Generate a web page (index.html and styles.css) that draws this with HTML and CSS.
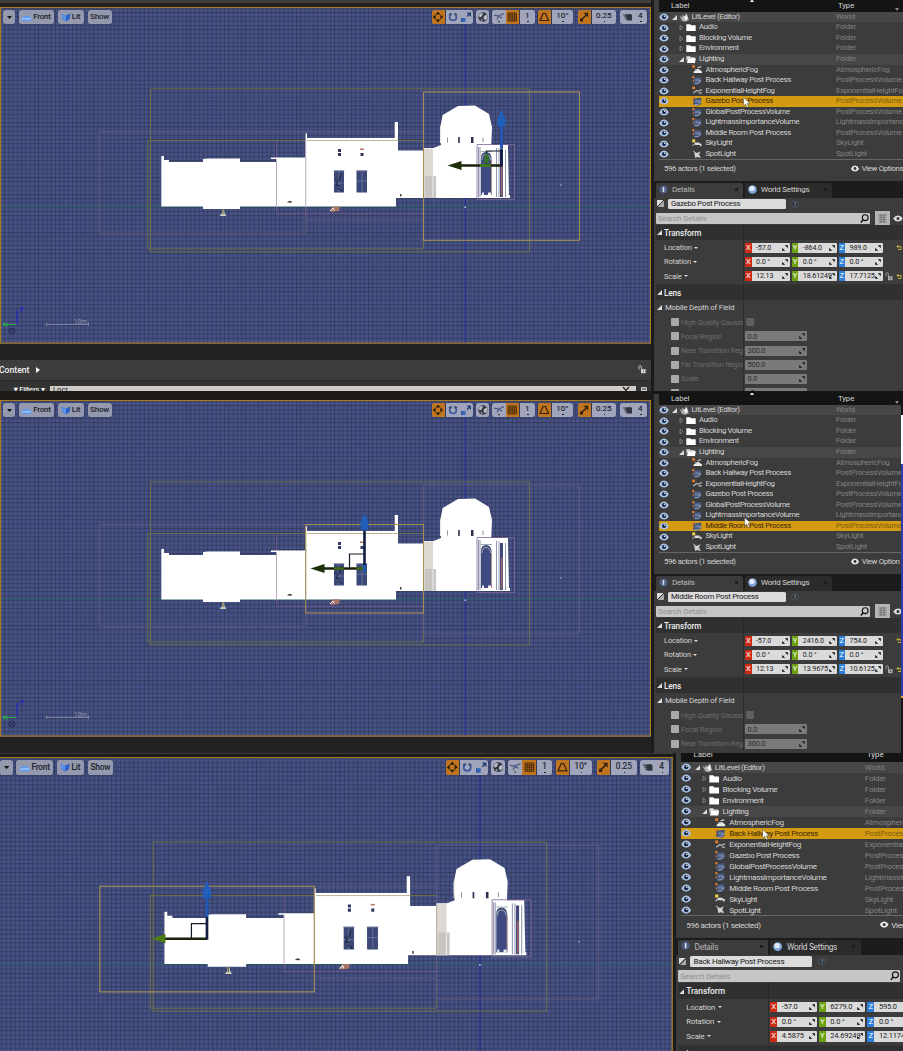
FILE: index.html
```html
<!DOCTYPE html>
<html lang="en">
<head>
<meta charset="utf-8">
<title>Level Editor</title>
<link rel="stylesheet" href="styles.css">
</head>
<body>
<svg class="defs" aria-hidden="true">
  <defs>
    <pattern id="grid" width="4.23" height="4.23" patternUnits="userSpaceOnUse" x="465.3" y="206.7">
      <path d="M0 0H4.23V4.23H0z" fill="#475289"/>
      <path d="M0 .5H4.23M.5 0V4.23" stroke="#353e60" stroke-width="1"/>
    </pattern>
    <symbol id="eye" viewBox="0 0 10 8"><path d="M.2 4.2Q2 .4 5 .4t4.800 3.800Q8 7.400 5 7.400T.2 4.200z" fill="#a9c0e2"/><circle cx="5" cy="4" r="2" fill="#14233f"/><circle cx="5.600" cy="3.200" r=".8" fill="#fff"/></symbol>
    <symbol id="folder" viewBox="0 0 10 8"><path d="M.3.8h3.800l1 1H9.700v5.800H.3z" fill="#fff"/></symbol>
    <symbol id="folder-open" viewBox="0 0 10 8"><path d="M.3.8h3.600l1 1h3.800v1.200H2.200L.6 6z" fill="#ddd"/><path d="M2.200 2.800h7.700L8.900 7.600H.9z" fill="#fff"/></symbol>
    <symbol id="world" viewBox="0 0 10 9"><path d="M.3 2.500 3 4.600 3.400 1.600l1.600 2L7.600.2 9.800 7 6.500 8.800 3.200 8z" fill="#b0b0b0"/><path d="M5 4l3-2 .6 4-2 1.600z" fill="#f2f2f2"/></symbol>
    <symbol id="volume" viewBox="0 0 10 9"><path d="M1.200 1.600 9.200.8v6L6 8.800 1.200 7.800z" fill="#3f5074"/><path d="M3 2.600h5v3.200H3z" fill="#66779a"/><path d="M2.600 7.600Q7.500 8.500 8.700 4" stroke="#b4c0d6" fill="none" stroke-width=".8"/><path d="M.2 0h2.200v2.200H.2zM.8 4h1v2h-1z" fill="#d9752c"/></symbol>
    <symbol id="fog" viewBox="0 0 10 9"><path d="M1.600 8Q1.200 5.600 4 5.400 5 3 7 4.200L10 6.400V8z" fill="#ececec"/><path d="M5.500 2.800 9 1.600M3 4.500l3 1" stroke="#ccc" stroke-width="1.200"/><path d="M.2.2h2.800v2.600H.2z" fill="#e07a2c"/></symbol>
    <symbol id="hfog" viewBox="0 0 10 9"><path d="M1.200 7 4.600 4.400 6 5.200 9.800 3.600M6.500 6.800H9.800" stroke="#bbb" fill="none" stroke-width="1.200"/><path d="M.2.6h2.800v2.600H.2z" fill="#e07a2c"/></symbol>
    <symbol id="sky" viewBox="0 0 10 9"><path d="M3 3.600h4.500v1.200H9.500v2.400H8V6H3z" fill="#ddd"/><path d="M.6 6.800 3.200 4.200" stroke="#ddd"/><path d="M.2.4h3v3H.2z" fill="#f3d24a"/></symbol>
    <symbol id="spot" viewBox="0 0 10 9"><path d="M2 1.400 5 3l3.600-1.800L7 4.400 8.800 8 5.200 7 3.200 8z" fill="#cfcfcf"/><path d="M.8.8l3 2.400" stroke="#aaa"/></symbol>
    <symbol id="expand" viewBox="0 0 6 6"><path d="M3.400.4H5.600V2.600zM.4 3.400 2.600 5.600H.4zM4.800 1.200 3.900 2.100M2.100 3.900 1.200 4.800" fill="#161616" stroke="#161616" stroke-width=".6"/></symbol>
    <symbol id="lock" viewBox="0 0 8 9"><path d="M1 4.5V2Q1 .8 2.200.8T3.400 2v2.400" fill="none" stroke="#ccc" stroke-width=".9"/><path d="M3 4.200h4.600v4H3z" fill="#d8d8d8"/><path d="M5 5.400h.8v1.600H5z" fill="#333"/></symbol>
    <symbol id="cursor" viewBox="0 0 8 11"><path d="M.6.4V8.800L2.600 7 4 10.400l1.500-.6L4.100 6.600H7z" fill="#fff" stroke="#333" stroke-width=".4"/></symbol>

    <g id="boxes" fill="none">
      <path d="M0 206.7H651" stroke="#2b6068" stroke-width="1"/>
      <path d="M465.3 7V344" stroke="#20289c" stroke-width="1"/>
      <path d="M150.5 88.800H529.500V252H150.500z" stroke="#686d48"/>
      <path d="M148 140.500H423.500V249H148z" stroke="#686d48"/>
    </g>
    <g id="volumes" fill="none" stroke="#645d80" stroke-width=".8">
      <path d="M99 131.500H305.700V233.300H99zM305.700 131.500H423.500V220H305.700zM423.500 92H579.500V240.300H423.500z"/>
      <path d="M276.500 141V213.500H423.500" stroke="#71548a"/>
    </g>
    <g id="building">
      <path d="M161.300 156H164V160H169V162H203V159L208 158.500H240V162H276.500V159H271V157.500H305.600V133.500H307V138H394.700V122H398V150.500H423.500V148H433.500L441 145 440 137V128L442.700 115 458 106 475 105.500 489 114 492 127 491.300 145H508V148L509 195H510V198H396V206.500H240V209H203V206.500H161.300z" fill="#fff"/>
      <path d="M423.500 148.500H433V198H423.500z" fill="#ddd8d2"/>
      <path d="M425 176H436V198H425z" fill="#c8c4c2"/>
      <path d="M433 176V198" stroke="#eee"/>
      <path d="M440.500 127V143" stroke="#eee8e2"/>
      <path d="M276.500 159V206M305.700 140V206" stroke="#b9aec0"/>
      <path d="M307 140.500H398M423.500 150V198" stroke="#a7a287" stroke-width=".8"/>
      <path d="M447.500 137.500V142.500M483 137.500V142" stroke="#777" stroke-width=".8"/>
      <path d="M458.200 137H459.800V143H458.200zM471 137H473.500V143H471z" fill="#2c304c"/>
      <path d="M338 149h3v3h-3zM338 153h3v3h-3zM360.500 153h3v3h-3z" fill="#333a60"/>
      <path d="M360 148.500h4v1.500h-4z" fill="#b87664"/>
      <path d="M334 170.500H344V192.500H334zM356.500 170.500H367V192.500H356.500z" fill="#3c4878"/>
      <path d="M333.500 171H344.500M356 171H367.500M339 172V192M362 172V192M334 183H344M357 181H367" stroke="#7c86aa" stroke-width=".6"/>
      <path d="M335 180l3 2-2 3 4 1M341 173l-2 8M338 188l4 3" stroke="#1a2236" fill="none"/>
      <path d="M287 202.500q2.500-3 5-.5v.8zM400 196.500V194h1.500v2.500z" fill="#444"/>
      <path d="M481 195V158Q481 152 486 152T491.500 158V195z" fill="#3f4b80"/>
      <path d="M481 151.500H492M482 160Q482 154.500 486 154.500T490.500 160" stroke="#9aa" fill="none"/>
      <path d="M478.500 147V197M480 147V197M496.500 148V197M499 148V197M505.500 150V197" stroke="#77799c" stroke-width=".8"/>
      <path d="M501.500 150V197" stroke="#414a78" stroke-width="3"/>
      <path d="M501.700 165V196" stroke="#b0685e" stroke-width="1.300"/>
      <path d="M491.500 160V195" stroke="#b28c8a"/>
      <path d="M482 192.500h2v2.500h-2zM488 192.500h3v2.500h-3zM506 193h3v3h-3z" fill="#eee"/>
      <path d="M477 144.500H514.500V199.500H477z" fill="none" stroke="#806598" stroke-width=".8"/>
      <path d="M222 209.500H224.200L224.500 213 226.500 216H219.500L222 213z" fill="#c7c8bd"/><path d="M223 209V214" stroke="#666030"/>
      <path d="M330 210l3-3.500H340L339 211 331 212z" fill="#a87468"/><path d="M330 211l3-3 1 2.500" stroke="#eee" fill="none"/>
      <path d="M560 184.500h1.500v1h-1.500zM464.500 206.500h1.500v1.500h-1.500z" fill="#bcd"/>
    </g>
    <g id="scale" fill="none">
      <path d="M46.500 322.500V326M46.500 324.500H88.500M88.500 322.500V326" stroke="#8b91ab" stroke-width=".8"/>
      <path d="M17 324V310M20 308h3.500l-3 4" stroke="#1c24c8"/>
      <path d="M16 324.500H3M5 322.500l-2 4M3 323l3 3.500M7 322.500v4" stroke="#27b04c"/>
      <circle cx="12" cy="331" r="3" stroke="#232a50"/><path d="M10.500 329l3 4M13.500 329l-3 4" stroke="#232a50" stroke-width=".7"/>
    </g>
  </defs>
</svg>
<main class="board" id="board"></main>
<script src="app.js"></script>
</body>
</html>
```

FILE: styles.css
```css
* { box-sizing: border-box; }
body { margin: 0; background: #1f1f1f; font-family: Roboto, "Noto Sans", sans-serif; }
.defs { position: absolute; width: 0; height: 0; }
.board { width: 903px; height: 1051px; overflow: hidden; }
svg { display: block; flex: none; }

.shot { overflow: hidden; }
.shot-a { height: 391px; }
.shot-b { height: 362px; position: relative; }
.shot-b .editor { margin-top: 2px; width: 901px; }
.shot-b { background: linear-gradient(90deg, #1f1b18 652px, #161616 652px); }
.shot-c { height: 298px; background: #171717; }
.shot-c .editor { zoom: 1.038; margin: -3px 0 0 -2.800px; }

.editor { display: grid; grid-template-columns: 651px 252px; width: 903px; height: 400px; overflow: hidden; position: relative; }
.left { background: #222; height: 400px; min-width: 0; overflow: hidden; }
.strip { height: 7px; background: #222; border-top: 3px solid #3d3d3d; }
.shot-b .strip, .shot-c .strip { border-top: 0; background: #1f1b18; }
.shot-c .strip { border-top: 4px solid #3a3a3a; }

.viewport { position: relative; height: 337px; overflow: hidden; }
.scene { position: absolute; inset: 0; }
.bar { position: relative; display: flex; padding: 3px 4px 0 3px; color: #20222b; font-weight: 500; font-size: 8px; letter-spacing: -.2px; line-height: 14px; }
.btn { height: 14px; border-radius: 2.500px; background: #9499ae; display: flex; align-items: center; justify-content: center; gap: 1px; box-shadow: 0 0 1px #20243c; overflow: hidden; flex: none; }
.btn.v1 { width: 12px; margin-right: 3.500px; }
.btn.v2 { width: 35px; margin-right: 4px; }
.btn.v3 { width: 26px; margin-right: 4px; }
.btn.v4 { width: 24px; }
.tools { margin-left: auto; display: flex; }
.tool { display: flex; height: 14px; border-radius: 2.500px; background: #a0a5bb; overflow: hidden; box-shadow: 0 0 1px #20243c; flex: none; }
.cell { display: flex; align-items: center; justify-content: center; height: 14px; flex: none; position: relative; }
.cell.on { background: #bf7420; border-right: 1px solid #343a55; }
.num { padding-bottom: 3px; font-size: 8px; font-weight: 400; letter-spacing: 0; -webkit-text-stroke: .15px #20222b; }
.num::after { content: ""; position: absolute; left: 50%; bottom: 2px; width: 1.500px; height: 1.200px; background: #222; }

.below { height: 16px; background: #222; }
.path { height: 20.500px; background: #3d3d3d; display: flex; align-items: center; justify-content: space-between; color: #f2f2f2; font-weight: 500; font-size: 8.600px; padding-right: 5px; border-bottom: 1px solid #2a2a2a; }
.path span { display: flex; gap: 7px; align-items: center; margin-left: -1px; }
.filters { height: 10.500px; background: #333; display: flex; font-size: 7.600px; color: #eee; overflow: hidden; }
.filters b { font-weight: 500; width: 50px; padding: 4px 0 0 12px; flex: none; line-height: 9px; white-space: nowrap; letter-spacing: -.2px; }
.filters i { width: 586px; height: 9px; margin-top: 5px; background: #cfcbc8; color: #222; padding: 0 6px 0 3px; font-style: normal; line-height: 8px; display: flex; justify-content: space-between; }
.filters i svg { margin: 0; }
.filters svg { margin: 5px 0 0 2px; }
.shot-b .below { height: 60px; border-bottom: 0; }
.shot-b .path, .shot-b .filters, .shot-c .path, .shot-c .filters { display: none; }

.right { background: #1b1b1b; padding-left: 3px; min-width: 0; overflow: hidden; color: #d4d4d4; font-size: 7.800px; letter-spacing: -.36px; white-space: nowrap; }
.panel { background: #3c3c3c; overflow: hidden; }
.tree { height: 181px; padding-left: 5px; }
.head { height: 12.800px; background: #141414; display: flex; line-height: 11px; position: relative; margin-top: -1px; padding-top: .5px; letter-spacing: -.1px; }
.shot-b .tree { margin-top: -2px; padding-top: 2px; background: linear-gradient(#141414 3px, #3c3c3c 3px); height: 183px; }
.head .a { padding-left: 12px; width: 179px; }
.head .sort { position: absolute; left: 91px; top: 0; border: 2.500px solid transparent; border-top: 0; border-bottom: 3px solid #eee; }
.head .drop { position: absolute; right: 4px; bottom: 1px; border: 2.500px solid transparent; border-bottom: 0; border-top: 3px solid #888; }
.row { height: 10.560px; display: flex; align-items: center; line-height: 10.560px; }
.row.lit { background: #474747; }
.row .see { margin-left: 0; width: 10px; height: 8px; }
.row .name { width: 167px; display: flex; align-items: center; overflow: hidden; }
.row .type { color: #828282; letter-spacing: -.28px; }
.row.sel { background: #d59b10; color: #3b2605; }
.row.sel .type { color: #7f5c12; }
.tw { width: 5px; height: 5px; margin-right: 2px; }
.d0 { padding-left: 3px; } .d1 { padding-left: 10px; } .d2 { padding-left: 23px; }
.name svg.ic { width: 10px; height: 9px; margin-right: 3.500px; }
.d0 svg.ic { margin-right: 2.500px; }
.d1 svg.ic { width: 10.500px; margin-right: 2.500px; }
.foot { height: 20px; border-top: 1px solid #666; display: flex; align-items: center; padding: 0 0 3.500px 5px; }
.foot .view { margin-left: 114px; display: flex; gap: 2px; align-items: center; }

.tabs { height: 16.500px; background: #1c1c1c; display: flex; padding: 2px 0 0 2px; gap: 2px; font-size: 8px; letter-spacing: -.25px; }
.tab { width: 87px; height: 14.500px; display: flex; align-items: center; gap: 4.500px; padding: 0 0 1.500px 2.500px; background: #2b2b2b; border-radius: 2px 2px 0 0; }
.tab.cur { background: #3c3c3c; color: #b9b9b9; }
.tab s { margin-left: auto; margin-right: 5px; width: 3px; height: 3px; background: #1f1f1f; }
.details { padding-left: 2px; height: 300px; }
.title { height: 13.500px; display: flex; align-items: center; padding: 0 0 1px 1px; }
.title .ed { width: 117.500px; height: 10.500px; background: #dcdcdc; color: #191919; border-radius: 1.500px; margin: 0 5px 0 4px; padding-left: 3px; line-height: 10.500px; letter-spacing: -.27px; }
.search { height: 14px; display: flex; align-items: center; letter-spacing: -.1px; }
.search .in { width: 217px; height: 11px; background: #c6c6c6; color: #8f8f8f; display: flex; justify-content: space-between; align-items: center; padding: 0 1px 0 2px; border-radius: 1px; }
.search .gr { width: 15px; height: 14px; background: #b4b4b4; margin: 0 3px 0 5px; display: flex; align-items: center; justify-content: center; }
.sect { height: 15px; background: linear-gradient(90deg, #303030 87px, #272727 87px, #272727 88px, #303030 88px); display: flex; align-items: center; padding-left: 1px; color: #ececec; font-weight: 500; font-size: 8.200px; letter-spacing: -.1px; }
.search + .sect { margin-bottom: .8px; }
.prop { height: 14.100px; display: flex; align-items: center; background: linear-gradient(90deg, transparent 87px, #2c2c2c 87px, #2c2c2c 88px, transparent 88px); font-size: 7.500px; letter-spacing: -.15px; }
.prop .lab { width: 87px; padding-left: 8px; display: flex; align-items: center; gap: 2.500px; overflow: hidden; flex: none; }
.lab::after { content: ""; border: 2.300px solid transparent; border-top: 2.800px solid #ddd; border-bottom: 0; }
.vals { display: flex; padding-left: 2px; gap: 2px; }
.val { width: 44.800px; height: 10px; display: flex; line-height: 10px; overflow: hidden; }
.val u { width: 6.500px; text-decoration: none; text-align: center; color: #fff; flex: none; font-size: 7.500px; letter-spacing: 0; }
.val:nth-child(1) u { background: #cf2b14; } .val:nth-child(2) u { background: #6ba00e; } .val:nth-child(3) u { background: #2c7fd8; }
.val em { flex: 1; min-width: 0; background: #dadada; color: #222; font-style: normal; font-size: 7.200px; letter-spacing: -.15px; display: flex; align-items: center; padding-left: 4.500px; overflow: hidden; position: relative; border-radius: 0 1px 1px 0; }
.val em svg { position: absolute; right: 2px; }
.sub { height: 15px; display: flex; align-items: center; gap: 1px; padding-left: 1px; font-size: 7.800px; letter-spacing: -.2px; background: linear-gradient(90deg, transparent 87px, #2c2c2c 87px, #2c2c2c 88px, transparent 88px); }
.dim { letter-spacing: -.2px; }
.dim .lab { padding-left: 15px; color: #6c6c6c; gap: 2px; }
.dim .lab::after { content: none; }
.dim .lab::before { content: ""; width: 8px; height: 8px; background: #a9a9a9; border-radius: 1px; flex: none; }
.dim .fld { margin-left: 2px; width: 62px; height: 10px; background: #7a7a7a; color: #2e2e2e; display: flex; align-items: center; justify-content: space-between; padding: 0 2.500px; border-radius: 1px; }
.dim .chk { margin-left: 3px; width: 8px; height: 8px; background: #5f5f5f; border-radius: 1px; }
.gap { height: 2.200px; border-bottom: 1px solid #333; }
.cursor { position: absolute; width: 8px; height: 11px; }
.edge { position: absolute; right: 0; top: 0; width: 2px; height: 362px; background: linear-gradient(#161616 24px, #fff 24px 73px, #323ca8 73px 305px, #d9a020 305px 307px, #161616 307px); }
```

FILE: app.js
```js
const use = (id, w, h, cls = "") =>
  `<svg class="${cls}" width="${w}" height="${h}"><use href="#${id}" width="${w}" height="${h}"/></svg>`;

const shots = [
  { cls: "a", sel: "Gazebo Post Process", box: [423.5, 92, 156, 148.3], giz: [501.5, 165.5], up: 17, green: "#1d3009",
    loc: ["-57.0", "-864.0", "989.0"], scale: ["12.13", "18.61249", "17.7125"], cur: [743, 97], opt: "View Options" },
  { cls: "b", sel: "Middle Room Post Process", box: [305.7, 131.5, 117.8, 88.5], giz: [364.5, 175.5], up: 38, green: "#1d3009",
    loc: ["-57.0", "2416.0", "754.0"], scale: ["12.13", "13.9675", "10.6125"], cur: [743.5, 124], opt: "View Option" },
  { cls: "c", sel: "Back Hallway Post Process", box: [99, 131.5, 206.7, 101.8], giz: [202.3, 182], up: 21, green: "#4b7a14",
    loc: ["-57.0", "6279.0", "595.0"], scale: ["4.5875", "24.69249", "12.11749"], cur: [736.5, 76.5], opt: "View Options" }
];

const actors = [
  ["LitLevel (Editor)", "World", "world", 0], ["Audio", "Folder", "folder", 1],
  ["Blocking Volume", "Folder", "folder", 1], ["Environment", "Folder", "folder", 1],
  ["Lighting", "Folder", "folder-open", 1], ["AtmosphericFog", "AtmosphericFog", "fog", 2],
  ["Back Hallway Post Process", "PostProcessVolume", "volume", 2],
  ["ExponentialHeightFog", "ExponentialHeightFo", "hfog", 2],
  ["Gazebo Post Process", "PostProcessVolume", "volume", 2],
  ["GlobalPostProcessVolume", "PostProcessVolume", "volume", 2],
  ["LightmassImportanceVolume", "LightmassImportanc", "volume", 2],
  ["Middle Room Post Process", "PostProcessVolume", "volume", 2],
  ["SkyLight", "SkyLight", "sky", 2], ["SpotLight", "SpotLight", "spot", 2]
];

const openTri = `<svg class="tw" viewBox="0 0 5 5"><path d="M5 0V5H0z" fill="#ddd"/></svg>`;
const shutTri = `<svg class="tw" viewBox="0 0 5 5"><path d="M1 0V5L4 2.5z" fill="none" stroke="#999" stroke-width=".7"/></svg>`;
const icon = (w, body) => `<svg width="${w}" height="12" viewBox="0 0 ${w} 12">${body}</svg>`;

const row = (a, sel) => {
  const tri = a[3] === 2 ? "" : (a[2] === "world" || a[2] === "folder-open") ? openTri : shutTri;
  const lit = a[2] === "world" || a[2] === "folder-open" ? " lit" : "";
  return `<div class="row${lit}${a[0] === sel ? " sel" : ""}">${use("eye", 10, 8, "see")}
    <span class="name d${a[3]}">${tri}${use(a[2], 10, 9, "ic")}${a[0]}</span><span class="type">${a[1]}</span></div>`;
};

const gizmo = ([x, y], up, green) => `<g fill="none">
  <path d="M${x} ${y}H${x - 42}" stroke="#182208" stroke-width="2.4"/>
  <path d="M${x - 15} ${y}V${y - 14.5}H${x}" stroke="#101c28" stroke-width="1.2"/>
  <path d="M${x} ${y + 1}V${y - up}" stroke="#101c40" stroke-width="2.6"/>
  <path d="M${x} ${y - up}V${y - 40}" stroke="#2458b4" stroke-width="3"/>
  <path d="M${x - 54} ${y}L${x - 40} ${y - 4.5}V${y + 4.5}z" fill="${green}"/>
  <path d="M${x} ${y - 56}L${x - 4} ${y - 46}V${y - 39}H${x + 4}V${y - 46}z" fill="#2060b8"/></g>`;

const lit = {
  a: `<path d="M480 165.5H491" stroke="#3d7820" stroke-width="3"/><path d="M484 163V157l3-4 2 4v6z" fill="#37702c"/>`,
  b: `<path d="M334 175.5H344M356.5 175.5H365" stroke="#3f6c18" stroke-width="2.4"/><path d="M364.5 172V179" stroke="#2458b4" stroke-width="3"/>`,
  c: ""
};

const scene = s => `<svg class="scene" width="651" height="337" viewBox="0 7 651 337">
  <path d="M0 7H651V344H0z" fill="url(#grid)"/><use href="#boxes"/><use href="#volumes"/><use href="#building"/>
  <rect x="${s.box[0]}" y="${s.box[1]}" width="${s.box[2]}" height="${s.box[3]}" fill="none" stroke="#a58f50"/>
  ${gizmo(s.giz, s.up, s.green)}${lit[s.cls]}<use href="#scale"/>
  <text x="74" y="323.5" font-size="6.5" fill="#9297ad">10m</text>
  <rect x=".5" y="7.5" width="650" height="335.500" fill="none" stroke="#a97c28" stroke-width="1.2"/></svg>`;

const cell = (w, body, on = "") => `<span class="cell ${on}" style="width:${w}px">${body}</span>`;
const tool = (body, gap) => `<div class="tool" style="margin-right:${gap}px">${body}</div>`;

const tools = `<div class="tools">` + [
  tool(cell(13.5, icon(12, `<path d="M6 .8 8.600 3.600H3.400zM6 11.200 8.600 8.400H3.400zM.8 6 3.600 3.400V8.600zM11.200 6 8.400 3.400V8.600z" fill="#2b1a08"/>`), "on")
    + cell(14, icon(12, `<path d="M3.400 3Q1 9.500 6 9.500T8.600 3" fill="none" stroke="#3a559c" stroke-width="1.700"/><path d="M1.200 3.800 4.600 1.600V4.600zM7.400 4.600V1.600l3.400 2.200z" fill="#34466f"/>`))
    + cell(13.5, icon(12, `<path d="M6.500 1.500H11V6zM1 6.500V11H5.500z" fill="#24427e"/><path d="M9 3.500 7 5.500M5 7.500 3 9.500" stroke="#24427e" stroke-width="1.500"/><path d="M1.500 7h4v4h-4z" fill="#3565b4"/>`)), 3),
  tool(cell(13, icon(12, `<circle cx="6" cy="6" r="4.700" fill="#33363f"/><path d="M3 2.500 6 2 5 5 3 6.500 1.800 5zM7 5l3-1.500L10.500 7 8 9.500 6.500 7zM3.500 8l2 .5-.5 2z" fill="#b9bdc9"/>`)), 3),
  tool(cell(13.5, icon(12, `<path d="M1 4 5.500 5.200 11 2.500M5.500 5.200 4 8.500M5.500 5.200 9 7" fill="none" stroke="#40455c"/><path d="M5.200 10h1.500v1.200H5.200z" fill="#222"/><circle cx="5.800" cy="5" r="1.500" fill="#506aa4"/>`))
    + cell(14.5, icon(12, `<path d="M2 2H10.500V10H2zM4 2V10M6.200 2V10M8.400 2V10M2 4H10.500M2 6H10.500M2 8H10.500" fill="none" stroke="#4a2a06" stroke-width=".9"/>`), "on")
    + cell(14.5, `<span class="num">1</span>`), 3.5),
  tool(cell(13.5, icon(12, `<path d="M5 2.500H7.500L10.500 9.500H2z" fill="none" stroke="#3a2208" stroke-width="1.200"/>`), "on") + cell(21.5, `<span class="num">10°</span>`), 4.5),
  tool(cell(14, icon(12, `<path d="M5.500 1.800H10.200V6.500zM2 7.500h3v3H2z" fill="#33200a"/><path d="M3 9.200 8 4.200" stroke="#33200a" stroke-width="1.500"/>`), "on") + cell(24.5, `<span class="num">0.25</span>`), 3.5),
  tool(cell(14, icon(12, `<path d="M4 3.500 9.500 3 11 4V9.500H6z" fill="#30343e"/><path d="M2 4H5M3 6H6M4 8H7" stroke="#454a58" stroke-width="1.200"/>`)) + cell(13.5, `<span class="num">4</span>`), 0)
].join("") + `</div>`;

const triple = (name, v, tail = "") => `<div class="prop"><span class="lab">${name}</span><div class="vals">` +
  ["X", "Y", "Z"].map((k, i) => `<div class="val"><u>${k}</u><em>${v[i]}${use("expand", 6, 6)}</em></div>`).join("") + `</div>${tail}</div>`;
const dim = (name, v) => `<div class="prop dim"><span class="lab">${name}</span>` +
  (v === null ? `<span class="chk"></span>` : `<span class="fld">${v}${use("expand", 6, 6)}</span>`) + `</div>`;
const reset = m => `<svg width="7" height="7" viewBox="0 0 7 7" style="margin-left:${m}px"><path d="M1 2.500H5V5.500H2M2.500.8 1 2.500l1.500 1.700" fill="none" stroke="#c9b83c" stroke-width=".9"/></svg>`;

const editor = s => `<section class="shot shot-${s.cls}"><div class="editor">
  <div class="left"><div class="strip"></div>
    <div class="viewport">${scene(s)}<div class="bar">
      <span class="btn v1"><svg width="5" height="3"><path d="M0 0H5L2.500 3z" fill="#111"/></svg></span>
      <span class="btn v2"><svg width="11" height="10"><path d="M2.500 4H8L10.500 6.500V9H.5V7z" fill="#5f9cf0"/><path d="M1 6.800H10" stroke="#bcd8ff"/></svg>Front</span>
      <span class="btn v3"><svg width="10" height="10"><path d="M.5 2 5 3.500 9.500 1.500 8.500 7 5 9.500 1.500 7z" fill="#2c5fc8"/><path d="M.5 2 5 3.500V9.500L1.500 7z" fill="#5a92e8"/></svg>Lit</span>
      <span class="btn v4">Show</span>${tools}</div></div>
    ${s.cls === "a" ? `<div class="below"></div>
    <div class="path"><span>Content <svg width="4" height="6"><path d="M0 0 4 3 0 6z" fill="#fff"/></svg></span>${use("lock", 8, 9)}</div>
    <div class="filters"><b>▼Filters ▾</b><i>Locr<svg width="8" height="6"><path d="M1 1l3 3.500L7 1" fill="none" stroke="#222" stroke-width="1.200"/></svg></i><svg width="12" height="6"><path d="M3 1h5l1 1v4H3z" fill="#ccc"/><path d="M4 3h4" stroke="#333"/></svg></div>` : ""}
  </div>
  <div class="right"><div class="panel tree">
    <div class="head"><span class="a">Label</span><span>Type</span><span class="sort"></span><span class="drop"></span></div>
    ${actors.map(a => row(a, s.sel)).join("")}
    <div class="foot"><span>596 actors (1 selected)</span><span class="view"><svg width="10" height="7" viewBox="0 0 10 8"><path d="M.2 4.200Q2 .6 5 .6t4.800 3.600Q8 7.400 5 7.400T.2 4.200z" fill="#e4e4e4"/><circle cx="5" cy="4" r="1.600" fill="#333"/></svg>${s.opt}</span></div></div>
    <div class="tabs"><div class="tab cur"><svg width="9" height="10"><circle cx="4.500" cy="4.500" r="4" fill="#4c5d82"/><path d="M4.500 2V7" stroke="#d8dde8" stroke-width="1.600"/></svg>Details<s></s></div>
      <div class="tab"><svg width="9" height="9"><circle cx="4.500" cy="4.500" r="4.300" fill="#7fa4d8"/><circle cx="4" cy="3.500" r="2.600" fill="#e2ecf8"/></svg>World Settings<s></s></div></div>
    <div class="panel details">
      <div class="title"><svg width="7" height="7"><path d="M0 0H7V7H0z" fill="#ddd"/><path d="M7 0V7H0z" fill="#aaa"/><path d="M0 7 7 0" stroke="#222"/></svg><span class="ed">${s.sel}</span>
        <svg width="8" height="8"><circle cx="4" cy="4" r="3.300" fill="#2d3238" stroke="#566069" stroke-width=".8"/><path d="M3 3q1-1.500 2 0L4 4.500V6" stroke="#7d94aa" fill="none" stroke-width=".8"/></svg></div>
      <div class="search"><span class="in">Search Details<svg width="9" height="9"><circle cx="5.200" cy="3.700" r="2.900" fill="none" stroke="#111" stroke-width="1.100"/><path d="M3.200 5.800.8 8.400" stroke="#111" stroke-width="1.500"/></svg></span>
        <span class="gr"><svg width="9" height="9"><path d="M.5 1H8.500M.5 3.300H8.500M.5 5.600H8.500M.5 8H8.500M3 .5V8.500M6 .5V8.500" stroke="#666" stroke-width=".8"/></svg></span>
        <svg width="10" height="7"><path d="M.2 3.500Q2 .6 5 .6t4.800 2.900Q8 6.600 5 6.600T.2 3.500z" fill="#ddd"/><circle cx="5" cy="3.500" r="1.500" fill="#333"/></svg></div>
      <div class="sect">${openTri}Transform</div>
      ${triple("Location", s.loc, reset(13))}${triple("Rotation", ["0.0 °", "0.0 °", "0.0 °"])}${triple("Scale", s.scale, `<span style="margin-left:2px;opacity:.7">${use("lock", 8, 9)}</span>` + reset(3))}
      <div class="gap"></div><div class="sect">${openTri}Lens</div>${s.cls === "c" ? "" : `<div class="sub">${openTri}Mobile Depth of Field</div>
      ${dim("High Quality Gaussia", null)}${dim("Focal Region", "0.0")}${dim("Near Transition Regi", "300.0")}${s.cls === "a" ? dim("Far Transition Region", "500.0") + dim("Scale", "0.0") + dim("", "") : ""}`}
    </div></div>
  <svg class="cursor" style="left:${s.cur[0]}px;top:${s.cur[1]}px"><use href="#cursor" width="8" height="11"/></svg>
  </div>${s.cls === "b" ? `<div class="edge"></div>` : ""}</section>`;

document.getElementById("board").innerHTML = shots.map(editor).join("");
```
